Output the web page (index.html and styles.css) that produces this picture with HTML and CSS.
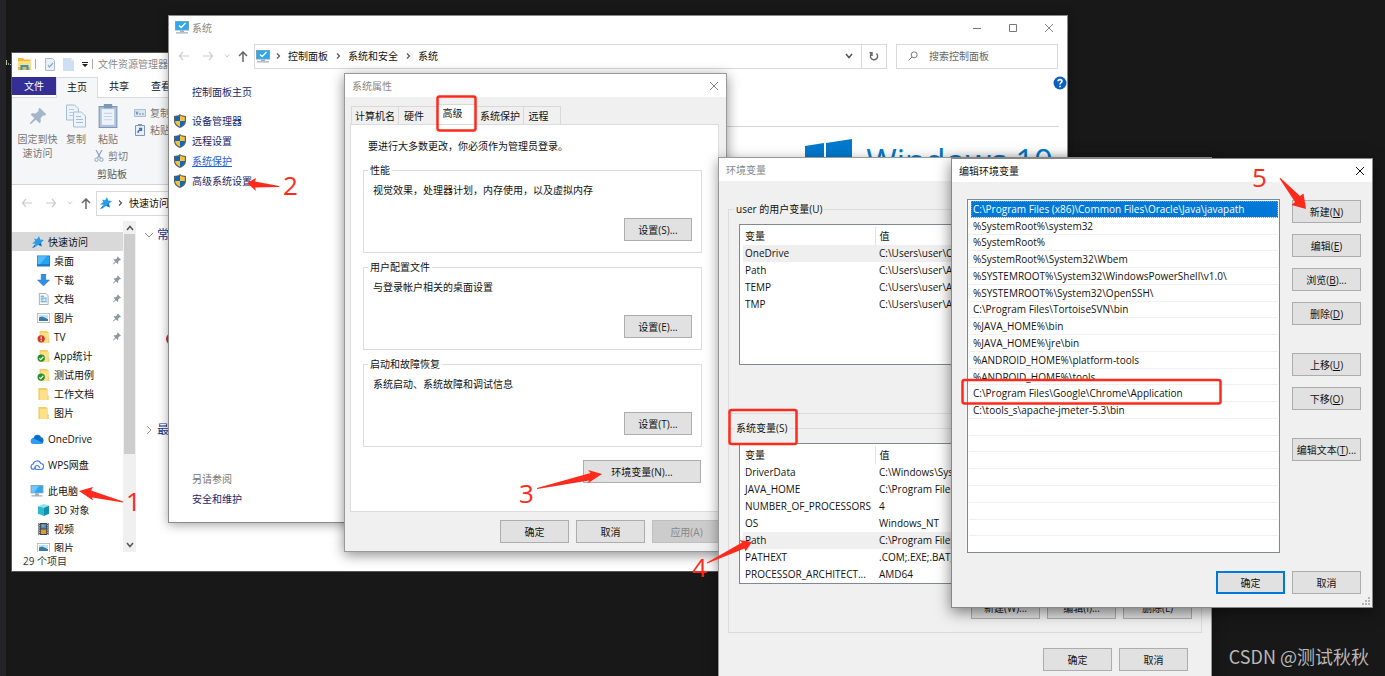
FILE: index.html
```html
<!DOCTYPE html>
<html lang="zh-CN">
<head>
<meta charset="utf-8">
<title>环境变量</title>
<link rel="stylesheet" href="styles.css">
</head>
<body>
<svg class="defs" aria-hidden="true">
  <symbol id="monitor" viewBox="0 0 14 13"><path fill="#8fa3b3" d="M0 0h14v9H0z"/><path fill="#2ea8ee" d="M1 1h12v7H1z"/><path fill="#6cc8fa" d="M1 1h8L4 8H1z"/><path fill="#9fb0bc" d="M5 9h4v2H5zM1 11h12v1.500H1z"/></symbol>
  <symbol id="syscheck" viewBox="0 0 14 13"><path fill="#8fa3b3" d="M0 0h14v9.500H0z"/><path fill="#2ea8ee" d="M.7.7h12.600v8H.7z"/><path fill="none" stroke="#fff" stroke-width="1.300" d="M4 4.500l2.200 2L10.500 2"/><path fill="#9fb0bc" d="M5 9.500h4v1.500H5zM1 11.300h12v1.200H1z"/></symbol>
  <symbol id="shield" viewBox="0 0 12 14"><path fill="#56626e" d="M6 0l1.500 1.200L12 2v5c0 3.500-3 6-6 7-3-1-6-3.500-6-7V2l4.500-.8z"/><path fill="#0b68c8" d="M6 1.300V7H1.200V3c2 0 3.500-.6 4.800-1.700zM6 7h4.800c0 2.700-2.300 4.700-4.800 5.700z"/><path fill="#fdc12e" d="M6 1.300V7h4.800V3C8.800 3 7.300 2.400 6 1.300zM6 7H1.200c0 2.700 2.300 4.700 4.800 5.700z"/></symbol>
  <symbol id="pin" viewBox="0 0 10 10"><path fill="currentColor" d="M6 0l4 4-1 .8-.8-.2L6.500 6.400l.2 2.100-.8.9L3.700 7.200.6 10 0 9.400l2.800-3.100L.6 4.100l.9-.8 2.100.2L5.400 1.800 5.200.9z"/></symbol>
  <symbol id="star" viewBox="0 0 12 12"><path fill="#2b9be8" d="M7 0l1.200 3.400L12 4 9 6.700l.6 3.800-3.300-1.800-3.600 2.600.8-3.600L0 7.500 3.300 5 2 2.400l3 .8z"/><path fill="#0c70c4" d="M6.300 8.700L9.600 10.500 9 6.700zM2.700 11.300L0 12l3.500-4.300z"/></symbol>
  <symbol id="folder" viewBox="0 0 11 13"><path fill="#f3cc62" d="M0 0h8l2 1.500V13H0z"/><path fill="#ffe08a" d="M1.500 2H10v11H1.500z"/><path fill="#e9bd52" d="M10 8h1v5h-1z"/></symbol>
  <symbol id="picture" viewBox="0 0 13 10"><path fill="#a2a9af" d="M0 0h13v10H0z"/><path fill="#fff" d="M.7.7h11.600v8.600H.7z"/><path fill="#bce2f7" d="M2 2h9v3H2z"/><path fill="#3979a3" d="M2 4.500l3-1 6 2.500v2H2z"/></symbol>
  <symbol id="x" viewBox="0 0 10 10"><path fill="none" stroke="currentColor" d="M1 1l8 8M9 1L1 9"/></symbol>
  <symbol id="back" viewBox="0 0 12 10"><path fill="none" stroke="currentColor" stroke-width="1.200" d="M5 1L1.500 5 5 9M1.500 5H11"/></symbol>
  <symbol id="fwd" viewBox="0 0 12 10"><path fill="none" stroke="currentColor" stroke-width="1.200" d="M7 1l3.500 4L7 9M10.500 5H1"/></symbol>
  <symbol id="up" viewBox="0 0 10 11"><path fill="none" stroke="currentColor" stroke-width="1.500" d="M1 5l4-4 4 4M5 1v10"/></symbol>
  <symbol id="down" viewBox="0 0 8 6"><path fill="none" stroke="currentColor" stroke-width="1.500" d="M1 1l3 3.500L7 1"/></symbol>
  <symbol id="tiny" viewBox="0 0 6 4"><path fill="none" stroke="currentColor" d="M1 .5l2 2.500 2-2.500"/></symbol>
  <symbol id="right" viewBox="0 0 5 8"><path fill="none" stroke="currentColor" stroke-width="1.200" d="M1 1.500L3.500 4 1 6.500"/></symbol>
</svg>

<main class="desktop">
  <div class="edge"></div>
  <svg class="speck" viewBox="0 0 6 5" aria-hidden="true"><path fill="#b7c96b" d="M0 0h1v5H0z"/><path fill="#5ba4d8" d="M2 3h1v2H2z"/><path fill="#b9bec4" d="M4 4h2v1H4z"/></svg>

  <section class="win explorer">
    <header class="ex-title">
      <svg class="i-ex" viewBox="0 0 13 12"><path fill="#f0b93c" d="M0 0h5l1 1.500h6.500V12H0z"/><path fill="#ffdf80" d="M0 3h12.500v6H0z"/><path fill="#2d92d8" d="M2.500 7h8v5H8.500V9h-4v3h-2z"/></svg>
      <span class="vbar"></span>
      <svg class="i-doc" viewBox="0 0 10 13"><path fill="#e9f0f8" stroke="#a9bdd2" d="M.5.500h7l2 2v10h-9z"/><path fill="none" stroke="#8ea9c6" stroke-width="1.200" d="M3 7l1.500 2L8 5"/></svg>
      <svg class="i-doc2" viewBox="0 0 11 13"><path fill="#cfdff3" d="M0 0h8l3 3v10H0z"/><path fill="#e4edf8" d="M8 0l3 3H8z"/></svg>
      <svg class="i-drop" viewBox="0 0 6 5"><path fill="#222" d="M0 0h6v1H0zM0 2h6L3 5z"/></svg>
      <span class="vbar"></span>
      <h2>文件资源管理器</h2>
    </header>
    <nav class="ribbon-tabs">
      <button class="rt file">文件</button><button class="rt on">主页</button><button class="rt">共享</button><button class="rt">查看</button>
    </nav>
    <div class="ribbon">
      <button class="big first"><svg class="i-big" viewBox="-1 -1 12 12"><use href="#pin" width="10" height="10"/></svg>固定到快<br>速访问</button>
      <button class="big"><svg class="i-big" viewBox="0 0 20 23"><path fill="#edf3fa" stroke="#a8bcd5" d="M.5.500h8l4 4v11H.5z"/><path stroke="#bccce0" d="M3 5h5M3 8h7M3 11h7"/><path fill="#edf3fa" stroke="#a8bcd5" d="M7.500 7.500h8l4 4v11h-12z"/><path stroke="#a8bcd5" d="M10 12h5M10 15h7M10 18h7"/></svg>复制</button>
      <div class="paste">
        <button class="big"><svg class="i-big" viewBox="0 0 18 23"><path fill="#b1c3da" stroke="#7f96b5" d="M.5 2.500h17v20H.5z"/><path fill="#edf3fa" d="M3 5h12v15H3z"/><path fill="#7f96b5" d="M5 0h8v4H5z"/><path stroke="#c6d5e6" d="M5 9h8M5 12h8M5 15h8"/></svg>粘贴</button>
        <button class="small"><svg class="i-cut" viewBox="0 0 10 12"><path fill="none" stroke="#8ba2c4" stroke-width="1.200" d="M2 0l4.500 8M8 0L3.500 8"/><circle cx="2.500" cy="9.700" r="1.700" fill="none" stroke="#8ba2c4"/><circle cx="7.500" cy="9.700" r="1.700" fill="none" stroke="#8ba2c4"/></svg>剪切</button>
        <span class="cap">剪贴板</span>
      </div>
      <div class="links">
        <button class="small"><svg class="i-link" viewBox="0 0 12 12"><path fill="#dbe6f3" stroke="#a9bfd9" d="M.5 2.500h11v7H.5z"/><path fill="none" stroke="#6c8bb1" d="M2 4.500l1 3 1-3M5 7h2M8 7h2"/></svg>复制</button>
        <button class="small"><svg class="i-link" viewBox="0 0 12 12"><path fill="#e6eef7" stroke="#7f96b5" d="M1.500 1.500h9v10h-9z"/><path fill="#7f96b5" d="M4 0h4v2H4z"/><path fill="none" stroke="#3e6ba5" stroke-width="1.300" d="M4 9c0-2 1-3 3-3M5 4.500h2.500V7"/></svg>粘贴</button>
      </div>
    </div>
    <div class="ex-addr">
      <svg class="i-nav faint"><use href="#back"/></svg><svg class="i-nav faint"><use href="#fwd"/></svg><svg class="i-tiny faint"><use href="#tiny"/></svg><svg class="i-up"><use href="#up"/></svg>
      <div class="addr"><svg class="i-12"><use href="#star"/></svg><svg class="i-chev"><use href="#right"/></svg><span>快速访问</span></div>
    </div>
    <div class="ex-body">
      <ul class="tree">
        <li class="root sel"><svg class="i-12"><use href="#star"/></svg>快速访问</li>
        <li><svg class="ti" viewBox="0 0 13 11"><path fill="#1b76c9" d="M0 0h13v11H0z"/><path fill="#22a4f5" d="M.7.7h11.600v8H.7z"/><path fill="#55bcfa" d="M.7.7h9l-7 8h-2z"/></svg>桌面<svg class="pin"><use href="#pin"/></svg></li>
        <li><svg class="ti" viewBox="0 0 13 13"><path fill="#2f8fe3" stroke="#1c6fbd" stroke-width=".5" d="M4 0h5v6.500h4L6.500 13 0 6.500h4z"/></svg>下载<svg class="pin"><use href="#pin"/></svg></li>
        <li><svg class="ti" viewBox="0 0 13 13"><path fill="#f7f9fa" stroke="#8c979f" stroke-width=".8" d="M2 .5h7l2.500 2.500v9.500H2z"/><path stroke="#3c94cb" d="M3.500 3.500H7M3.500 5.500H10M3.500 7.500h3M3.500 9.500H10M8 7.500h2"/></svg>文档<svg class="pin"><use href="#pin"/></svg></li>
        <li><svg class="ti"><use href="#picture"/></svg>图片<svg class="pin"><use href="#pin"/></svg></li>
        <li><svg class="ti" viewBox="0 0 13 13"><use href="#folder" x="2" width="11" height="13"/><circle cx="4" cy="8.500" r="4" fill="#d13a26"/><path fill="#fff" d="M3.400 6h1.200v3H3.400zM3.400 9.800h1.200V11H3.400z"/></svg>TV<svg class="pin"><use href="#pin"/></svg></li>
        <li><svg class="ti" viewBox="0 0 13 13"><use href="#folder" x="2" width="11" height="13"/><circle cx="4" cy="8.800" r="4" fill="#23922a"/><path fill="none" stroke="#fff" stroke-width="1.300" d="M2 9l1.500 1.500L6.300 7.300"/></svg>App统计</li>
        <li><svg class="ti" viewBox="0 0 13 13"><use href="#folder" x="2" width="11" height="13"/><circle cx="4" cy="8.800" r="4" fill="#23922a"/><path fill="none" stroke="#fff" stroke-width="1.300" d="M2 9l1.500 1.500L6.300 7.300"/></svg>测试用例</li>
        <li><svg class="ti"><use href="#folder"/></svg>工作文档</li>
        <li><svg class="ti"><use href="#folder"/></svg>图片</li>
        <li class="root gap"><svg class="ri" viewBox="0 0 14 10"><path fill="#0d6fc9" d="M3.500 4A4 4 0 0 1 11 3a3.500 3.500 0 0 1 0 6.800H3A3 3 0 0 1 3.500 4z"/><path fill="#2b9ff0" d="M1 9a3 3 0 0 1 3-4.500L13 9c-.5.800-1.200.8-2 .8H3C2 9.800 1.500 9.500 1 9z"/></svg>OneDrive</li>
        <li class="root gap"><svg class="ri" viewBox="0 0 14 11"><path fill="none" stroke="#4a80e8" stroke-width="1.200" d="M3.500 10a2.800 2.800 0 0 1-.3-5.500A4 4 0 0 1 10.800 4 3 3 0 0 1 10.500 10H7a2 2 0 1 1 1.500-3.300L10 8.500M3.500 10L6 7"/></svg>WPS网盘</li>
        <li class="root gap"><svg class="ri"><use href="#monitor"/></svg>此电脑</li>
        <li><svg class="ti" viewBox="0 0 13 13"><path fill="#8be3ee" d="M.5 2.500L7 0l5.500 2L7 4z"/><path fill="#2eb7cd" d="M.5 2.500L7 4v9L.5 10.500z"/><path fill="#1390ab" d="M12.500 2L7 4v9l5.500-2.500z"/></svg>3D 对象</li>
        <li><svg class="ti" viewBox="0 0 13 13"><path fill="#3b4046" d="M1 0h11v13H1z"/><path fill="#4a8cd0" d="M3.500 1h6v5h-6z"/><path fill="#d99a3a" d="M3.500 7h6v5h-6zM5 2h2v2H5z"/><path stroke="#d8dce0" stroke-dasharray="1 1" d="M2.200 0v13M10.800 0v13"/></svg>视频</li>
        <li><svg class="ti"><use href="#picture"/></svg>图片</li>
      </ul>
      <div class="scroll"><svg class="i-sm flip"><use href="#down"/></svg><div class="thumb"></div><svg class="i-sm"><use href="#down"/></svg></div>
      <div class="content">
        <div class="grp"><svg class="i-cd"><path fill="none" stroke="#888" d="M1 1l4 4 4-4"/></svg><span>常用</span></div>
        <div class="dot"></div>
        <div class="grp"><svg class="i-cr"><path fill="none" stroke="#999" d="M3 1l4 4-4 4"/></svg><span>最近</span></div>
      </div>
    </div>
    <footer class="status">29 个项目</footer>
  </section>

  <section class="win system">
    <header class="bar sys-bar"><svg class="i-mon"><use href="#syscheck"/></svg><h2>系统</h2>
      <button aria-label="最小化"><svg class="i-10" viewBox="0 0 10 10"><path stroke="#777" d="M1 5.500h8"/></svg></button><button aria-label="最大化"><svg class="i-10" viewBox="0 0 10 10"><path fill="none" stroke="#777" d="M1.500 1.500h7v7h-7z"/></svg></button><button aria-label="关闭"><svg class="i-10"><use href="#x"/></svg></button>
    </header>
    <div class="sys-nav">
      <svg class="i-nav faint"><use href="#back"/></svg><svg class="i-nav faint"><use href="#fwd"/></svg><svg class="i-tiny faint"><use href="#tiny"/></svg><svg class="i-up"><use href="#up"/></svg>
      <div class="crumbs"><svg class="i-mon"><use href="#syscheck"/></svg><svg class="i-chev first"><use href="#right"/></svg><span>控制面板</span><svg class="i-chev"><use href="#right"/></svg><span>系统和安全</span><svg class="i-chev"><use href="#right"/></svg><span>系统</span><svg class="i-sm end"><use href="#down"/></svg>
      <button class="refresh" aria-label="刷新"><svg class="i-10" viewBox="0 0 10 10"><path fill="none" stroke="#666" stroke-width="1.400" d="M3 2.200A3.600 3.600 0 1 0 7.500 2.600M3 5V1.800H.5"/></svg></button></div>
      <label class="search"><svg class="i-10" viewBox="0 0 10 10"><circle cx="6.200" cy="3.800" r="3" fill="none" stroke="#777"/><path stroke="#777" d="M4 6L.5 9.500"/></svg><input type="text" placeholder="搜索控制面板" aria-label="搜索控制面板"></label>
    </div>
    <div class="sys-body">
      <nav class="side">
        <a class="home" href="#">控制面板主页</a>
        <a href="#"><svg class="i-sh"><use href="#shield"/></svg>设备管理器</a>
        <a href="#"><svg class="i-sh"><use href="#shield"/></svg>远程设置</a>
        <a href="#" class="hot"><svg class="i-sh"><use href="#shield"/></svg><span>系统保护</span></a>
        <a href="#"><svg class="i-sh"><use href="#shield"/></svg>高级系统设置</a>
        <span class="also">另请参阅</span>
        <a class="home safe" href="#">安全和维护</a>
      </nav>
      <div class="sys-main">
        <svg class="help" viewBox="0 0 14 14"><circle cx="7" cy="7" r="6.500" fill="#0a5fc0"/><path fill="none" stroke="#fff" stroke-width="1.600" d="M5 5.300C5 3 9 3 9 5.300 9 6.800 7 6.700 7 8.500M7 9.700v1.500"/></svg>
        <hr>
        <div class="brand"><svg class="winlogo" viewBox="0 0 47 48"><path fill="#0078cc" d="M0 7l19-3v19H0zM21 4l26-4v23H21zM0 25h19v19L0 41zM21 25h26v23l-26-4z"/></svg><span>Windows 10</span></div>
      </div>
    </div>
  </section>

  <section class="win props">
    <header class="bar"><h2>系统属性</h2><button aria-label="关闭"><svg class="i-10"><use href="#x"/></svg></button></header>
    <div class="props-body">
      <nav class="tabs"><button class="t1">计算机名</button><button class="t2">硬件</button><button class="t3 on">高级</button><button class="t4">系统保护</button><button class="t5">远程</button></nav>
      <div class="panel">
        <p>要进行大多数更改，你必须作为管理员登录。</p>
        <fieldset><legend>性能</legend><p>视觉效果，处理器计划，内存使用，以及虚拟内存</p><button class="btn">设置(S)...</button></fieldset>
        <fieldset><legend>用户配置文件</legend><p>与登录帐户相关的桌面设置</p><button class="btn">设置(E)...</button></fieldset>
        <fieldset><legend>启动和故障恢复</legend><p>系统启动、系统故障和调试信息</p><button class="btn">设置(T)...</button></fieldset>
        <button class="btn wide">环境变量(N)...</button>
      </div>
      <div class="actions"><button class="btn">确定</button><button class="btn">取消</button><button class="btn" disabled>应用(A)</button></div>
    </div>
  </section>

  <section class="win env">
    <header class="bar"><h2>环境变量</h2></header>
    <div class="env-body">
      <fieldset><legend>user 的用户变量(U)</legend>
        <div class="tbl"><table>
          <thead><tr><th>变量</th><th>值</th></tr></thead>
          <tbody><tr class="sel"><td>OneDrive</td><td>C:\Users\user\OneDrive</td></tr><tr><td>Path</td><td>C:\Users\user\AppData</td></tr><tr><td>TEMP</td><td>C:\Users\user\AppData</td></tr><tr><td>TMP</td><td>C:\Users\user\AppData</td></tr></tbody>
        </table></div>
      </fieldset>
      <fieldset><legend>系统变量(S)</legend>
        <div class="tbl"><table>
          <thead><tr><th>变量</th><th>值</th></tr></thead>
          <tbody><tr><td>DriverData</td><td>C:\Windows\System32</td></tr><tr><td>JAVA_HOME</td><td>C:\Program Files</td></tr><tr><td>NUMBER_OF_PROCESSORS</td><td>4</td></tr><tr><td>OS</td><td>Windows_NT</td></tr><tr class="sel"><td>Path</td><td>C:\Program Files</td></tr><tr><td>PATHEXT</td><td>.COM;.EXE;.BAT;</td></tr><tr><td>PROCESSOR_ARCHITECT...</td><td>AMD64</td></tr></tbody>
        </table></div>
        <div class="row"><button class="btn">新建(W)...</button><button class="btn">编辑(I)...</button><button class="btn">删除(L)</button></div>
      </fieldset>
      <div class="row foot"><button class="btn">确定</button><button class="btn">取消</button></div>
    </div>
  </section>

  <section class="win edit">
    <header class="bar"><h2>编辑环境变量</h2><button aria-label="关闭"><svg class="i-10"><use href="#x"/></svg></button></header>
    <div class="edit-body">
      <ul class="list">
        <li class="sel">C:\Program Files (x86)\Common Files\Oracle\Java\javapath</li>
        <li>%SystemRoot%\system32</li><li>%SystemRoot%</li><li>%SystemRoot%\System32\Wbem</li>
        <li>%SYSTEMROOT%\System32\WindowsPowerShell\v1.0\</li><li>%SYSTEMROOT%\System32\OpenSSH\</li>
        <li>C:\Program Files\TortoiseSVN\bin</li><li>%JAVA_HOME%\bin</li><li>%JAVA_HOME%\jre\bin</li>
        <li>%ANDROID_HOME%\platform-tools</li><li>%ANDROID_HOME%\tools</li>
        <li>C:\Program Files\Google\Chrome\Application</li><li>C:\tools_s\apache-jmeter-5.3\bin</li>
        <li></li><li></li><li></li><li></li><li></li><li></li><li></li><li></li>
      </ul>
      <div class="cmds">
        <button class="btn">新建(<u>N</u>)</button><button class="btn">编辑(<u>E</u>)</button><button class="btn">浏览(<u>B</u>)...</button><button class="btn">删除(<u>D</u>)</button>
        <button class="btn sep">上移(<u>U</u>)</button><button class="btn">下移(<u>O</u>)</button>
        <button class="btn sep">编辑文本(<u>T</u>)...</button>
      </div>
    </div>
    <div class="edit-foot"><button class="btn ok">确定</button><button class="btn">取消</button></div>
    <svg class="grip" viewBox="0 0 8 8"><path fill="#b5b5b5" d="M6 0h2v2H6zM3 3h2v2H3zM6 3h2v2H6zM0 6h2v2H0zM3 6h2v2H3zM6 6h2v2H6z"/></svg>
  </section>

  <svg class="marks" width="1385" height="676" viewBox="0 0 1385 676">
    <g fill="none" stroke="#ff2a1c" stroke-width="2.500"><rect x="437.500" y="96.500" width="38" height="34" rx="2"/><rect x="729.500" y="410" width="67" height="34" rx="2"/><rect x="962.500" y="380" width="258" height="23.500" rx="2"/></g>
    <g fill="#ff2a1c">
      <path d="M79 491l14-4-2 3.500L123 501.500v1L92 497.500l1 3z"/>
      <path d="M247 183l9-5-1 3.500 24 4.500v1l-24 .5 1 3.500z"/>
      <path d="M602 474l-14-4 2.500 3L537 488v1l52-8.500-1.500 3z"/>
      <path d="M752 542l-13-2 3 2.500L707 562.500v1L744.500 548.500l1 3z"/>
      <path d="M1306 209l-2.500-15.500-3.500 2.500L1280.500 178l-1 .5L1295 202l-3.500 3z"/>
    </g>
    <g class="nums"><text x="126" y="511">1</text><text x="283" y="195">2</text><text x="519" y="503">3</text><text x="692" y="577">4</text><text x="1252" y="187">5</text></g>
  </svg>
  <div class="watermark">CSDN @测试秋秋</div>
</main>
</body>
</html>
```
FILE: styles.css
```css
* { box-sizing: border-box; }
body { margin: 0; background: #181818; color: #111; font: 10px/14px "Open Sans", "Noto Sans CJK SC", sans-serif; }
h2, p, ul { margin: 0; padding: 0; font-size: 10px; font-weight: 400; list-style: none; }
button { border: 0; padding: 0; background: none; font: inherit; color: inherit; }
a { color: inherit; text-decoration: none; }
svg { display: block; flex: none; }
.defs { position: absolute; width: 0; height: 0; }

.desktop { position: relative; min-height: 100vh; overflow: hidden; }
.edge { position: absolute; left: 0; top: 0; bottom: 0; width: 6px; background: #242428; }
.speck { position: absolute; left: 6px; top: 60px; width: 6px; height: 5px; }
.win { position: absolute; background: #fff; display: flex; flex-direction: column; white-space: nowrap; }

.i-10 { width: 10px; height: 10px; }
.i-12 { width: 12px; height: 12px; }
.i-nav { width: 12px; height: 10px; color: #777; }
.i-sm { width: 8px; height: 6px; color: #555; }
.i-tiny { width: 6px; height: 4px; }
.i-up { width: 10px; height: 11px; color: #666; }
.i-chev { width: 5px; height: 8px; color: #555; }
.i-mon { width: 14px; height: 13px; }
.faint { color: #ccc; }
.flip { transform: rotate(180deg); }

.bar { display: flex; align-items: center; height: 23px; padding: 0 7px; background: #fff; color: #888; }
.bar h2 { flex: 1; }

/* File explorer */
.explorer { left: 11px; top: 52px; width: 720px; height: 520px; border: 1px solid #555; }
.ex-title { display: flex; align-items: center; height: 24px; padding: 0 0 2px 6px; gap: 8px; color: #888; }
.ex-title h2 { margin-left: -4px; }
.vbar { width: 1px; height: 10px; background: #aaa; margin-right: 1px; margin-left: -4px; }
.i-ex { width: 13px; height: 12px; }
.i-doc { width: 10px; height: 13px; }
.i-doc2 { width: 11px; height: 13px; }
.i-drop { width: 6px; height: 5px; }
.ribbon-tabs { display: flex; height: 21px; border-bottom: 1px solid #dadbdc; }
.rt { width: 42px; padding: 0 0 2px; }
.rt.file { width: 44px; height: 18px; padding: 0; background: #352f95; color: #fff; }
.rt.on { height: 21px; background: #f5f6f7; border: 1px solid #dadbdc; border-bottom: 0; }
.ribbon { display: flex; height: 87px; padding: 6px 0 0 5px; background: #f5f6f7; border-bottom: 1px solid #d3d4d5; color: #777; }
.big { display: flex; flex-direction: column; align-items: center; width: 36px; height: 56px; text-align: center; }
.big.first { width: 41px; }
.big.first .i-big { color: #a4b6ca; }
.i-big { width: 20px; height: 24px; margin-bottom: 4px; }
.paste { display: flex; flex-direction: column; width: 41px; }
.paste .big { height: 43px; width: 28px; }
.small { display: flex; align-items: center; gap: 4px; height: 17px; }
.i-cut { width: 10px; height: 12px; }
.i-link { width: 12px; height: 12px; }
.links { margin-left: -1px; }
.cap { margin-top: 3px; color: #555; padding-left: 3px; }
.ex-addr { display: flex; align-items: center; height: 36px; padding-left: 9px; gap: 12px; }
.ex-addr .i-tiny, .sys-nav .i-tiny { margin-left: -2px; margin-right: -4px; }
.ex-addr .i-up { margin-right: -7px; }
.addr { display: flex; align-items: center; gap: 6px; flex: 1; height: 25px; padding-left: 3px; border: 1px solid #d9d9d9; }
.ex-body { display: flex; flex: 1; min-height: 0; overflow: hidden; }
.tree { width: 111px; padding-top: 11px; overflow: hidden; }
.tree li { display: flex; align-items: center; height: 19px; padding: 0 2px 0 25px; gap: 4px; }
.tree .root { padding-left: 20px; }
.tree .gap { margin-top: 7px; padding-left: 18px; }
.tree .sel { background: #d9d9d9; }
.ti { width: 13px; height: 12px; }
.ri { width: 14px; height: 12px; }
.pin { width: 8px; height: 9px; margin-left: auto; color: #8a979f; }
.scroll { display: flex; flex-direction: column; align-items: center; width: 13px; padding: 4px 0; background: #f0f0f0; }
.thumb { width: 11px; height: 220px; margin: 3px 0 auto; background: #cdcdcd; }
.content { flex: 1; padding: 6px 8px; color: #26348c; font-size: 12px; position: relative; }
.grp { display: flex; align-items: center; gap: 3px; height: 16px; margin-bottom: 179px; }
.i-cd { width: 10px; height: 6px; }
.i-cr { width: 10px; height: 10px; }
.dot { position: absolute; left: 30px; top: 112px; width: 12px; height: 12px; border-radius: 50%; background: #c92f2a; }
.status { height: 19px; padding: 2px 11px; color: #333; }

/* System window */
.system { left: 168px; top: 15px; width: 900px; height: 508px; border: 1px solid #8a8a8a; box-shadow: 0 2px 10px rgba(0,0,0,.35); }
.sys-bar { gap: 26px; padding: 0 13px 0 6px; }
.sys-bar h2 { margin-left: -23px; }
.sys-nav { display: flex; align-items: center; gap: 12px; height: 34px; padding: 0 9px; }
.sys-nav > .i-up { margin-right: -6px; }
.crumbs { display: flex; align-items: center; flex: 1; height: 25px; gap: 8px; padding-left: 1px; border: 1px solid #d9d9d9; margin-right: -3px; }
.crumbs .i-chev { margin: 0 -1px 0 0; }
.crumbs .first { margin-left: -2px; }
.crumbs .end { margin-left: auto; margin-right: 0; }
.refresh { display: flex; align-items: center; justify-content: center; width: 25px; height: 23px; border-left: 1px solid #d9d9d9; }
.search { display: flex; align-items: center; gap: 11px; width: 162px; height: 25px; padding-left: 11px; border: 1px solid #d9d9d9; }
.search input { border: 0; padding: 0; width: 120px; font: inherit; outline: 0; }
.search input::placeholder { color: #666; }
.sys-body { display: flex; flex: 1; }
.side { display: flex; flex-direction: column; width: 180px; padding: 12px 0 16px 5px; color: #1a1f6a; }
.side a { display: flex; align-items: center; gap: 6px; height: 20px; }
.side .home { height: 14px; padding-left: 18px; margin-bottom: 12px; }
.side .hot { color: #1a5fe0; text-decoration: underline; }
.side .also { margin-top: auto; padding-left: 18px; color: #777; }
.side .safe { margin: 6px 0 0; }
.i-sh { width: 12px; height: 14px; }
.sys-main { flex: 1; display: flex; flex-direction: column; padding-right: 8px; }
.help { width: 14px; height: 14px; margin: 3px -8px 0 auto; }
.sys-main hr { width: 100%; margin: 36px 0 12px; border: 0; border-top: 1px solid #d5d5d5; }
.brand { display: flex; gap: 14px; margin-left: auto; margin-right: 6px; color: #0078cc; font: 33px/44px "Open Sans", sans-serif; }
.winlogo { width: 47px; height: 48px; }

/* Dialogs */
.btn { width: 69px; height: 23px; background: #e1e1e1; border: 1px solid #adadad; color: #111; }
.btn:disabled { background: #ccc; border-color: #bfbfbf; color: #888; }
fieldset { margin: 0; border: 1px solid #dcdcdc; min-width: 0; }
legend { padding: 0 2px; margin-left: -5px; }

.props { left: 344px; top: 73px; width: 383px; height: 479px; border: 1px solid #999; box-shadow: 0 3px 12px rgba(0,0,0,.45); background: #f0f0f0; }
.props-body { flex: 1; display: flex; flex-direction: column; padding: 7px 7px 8px 5px; }
.tabs { display: flex; align-items: flex-end; height: 20px; padding-left: 1px; }
.tabs button { height: 18px; background: #f0f0f0; border: 1px solid #d9d9d9; border-bottom: 0; border-left: 0; }
.tabs .t1 { width: 48px; border-left: 1px solid #d9d9d9; }
.tabs .t2 { width: 38px; padding-right: 7px; }
.tabs .t3 { width: 40px; height: 20px; padding: 0 8px 3px 0; background: #fff; }
.tabs .t4 { width: 47px; }
.tabs .t5 { width: 37px; padding-right: 7px; }
.panel { flex: 1; display: flex; flex-direction: column; padding: 14px 16px 0 12px; background: #fff; border: 1px solid #dcdcdc; }
.panel > p { padding-left: 5px; margin-bottom: 10px; }
.panel fieldset { display: flex; flex-direction: column; height: 90px; padding: 6px 9px 11px; margin-bottom: 7px; }
.panel fieldset .btn { margin: 21px 0 0 auto; width: 68px; }
.panel .wide { width: 118px; margin: 6px 1px 0 auto; }
.actions { display: flex; justify-content: flex-end; gap: 7px; padding-top: 8px; margin-right: -2px; }

.env { left: 718px; top: 157px; width: 494px; height: 530px; border: 1px solid #999; background: #f0f0f0; box-shadow: 0 3px 12px rgba(0,0,0,.4); }
.env-body { padding: 21px 9px 0; }
.env fieldset { height: 212px; padding: 8px 9px 8px 10px; margin-bottom: 7px; }
.tbl { height: 141px; background: #fff; border: 1px solid #828790; padding: 2px 3px; }
table { width: 100%; border-collapse: collapse; table-layout: fixed; }
th, td { height: 17px; padding: 0 0 0 2px; text-align: left; font-weight: 400; line-height: 17px; }
th { height: 18px; }
th:first-child { width: 132px; border-right: 1px solid #e3e3e3; }
td:nth-child(2), th:nth-child(2) { padding-left: 4px; }
.env .sel { background: #efefef; }
.row { display: flex; justify-content: flex-end; gap: 7px; padding-top: 12px; }
.row.foot { padding: 8px 14px 0 0; }

.edit { left: 951px; top: 158px; width: 422px; height: 450px; border: 1px solid #888; background: #f0f0f0; box-shadow: 0 4px 14px rgba(0,0,0,.5); }
.edit .bar { color: #111; }
.edit-body { display: flex; gap: 12px; padding: 17px 11px 0 15px; }
.list { display: flex; flex-direction: column; flex: 1; height: 354px; border: 1px solid #828790; background: #fff; padding: 1px 1px 0 1px; }
.list li { flex: 1; display: flex; align-items: center; min-height: 0; padding-left: 4px; border-bottom: 1px solid #f0f0f0; }
.list li:last-child { border-bottom: 0; }
.list .sel { margin-left: 2px; padding-left: 2px; background: #0078d7; color: #fff; outline: 1px dotted #d58a4a; outline-offset: -1px; }
.cmds { display: flex; flex-direction: column; gap: 11px; padding-top: 1px; }
.cmds .sep { margin-top: 17px; }
.edit-foot { display: flex; justify-content: flex-end; gap: 7px; padding: 18px 11px 0 0; }
.ok { border: 2px solid #0078d7; }
.grip { position: absolute; right: 2px; bottom: 2px; width: 8px; height: 8px; }

.marks { position: absolute; left: 0; top: 0; pointer-events: none; }
.nums { fill: #ff2a1c; font-size: 26px; }
.watermark { position: absolute; right: 16px; bottom: 9px; color: #b8b8b8; font: 18px/22px "Noto Sans CJK SC", sans-serif; }
```
